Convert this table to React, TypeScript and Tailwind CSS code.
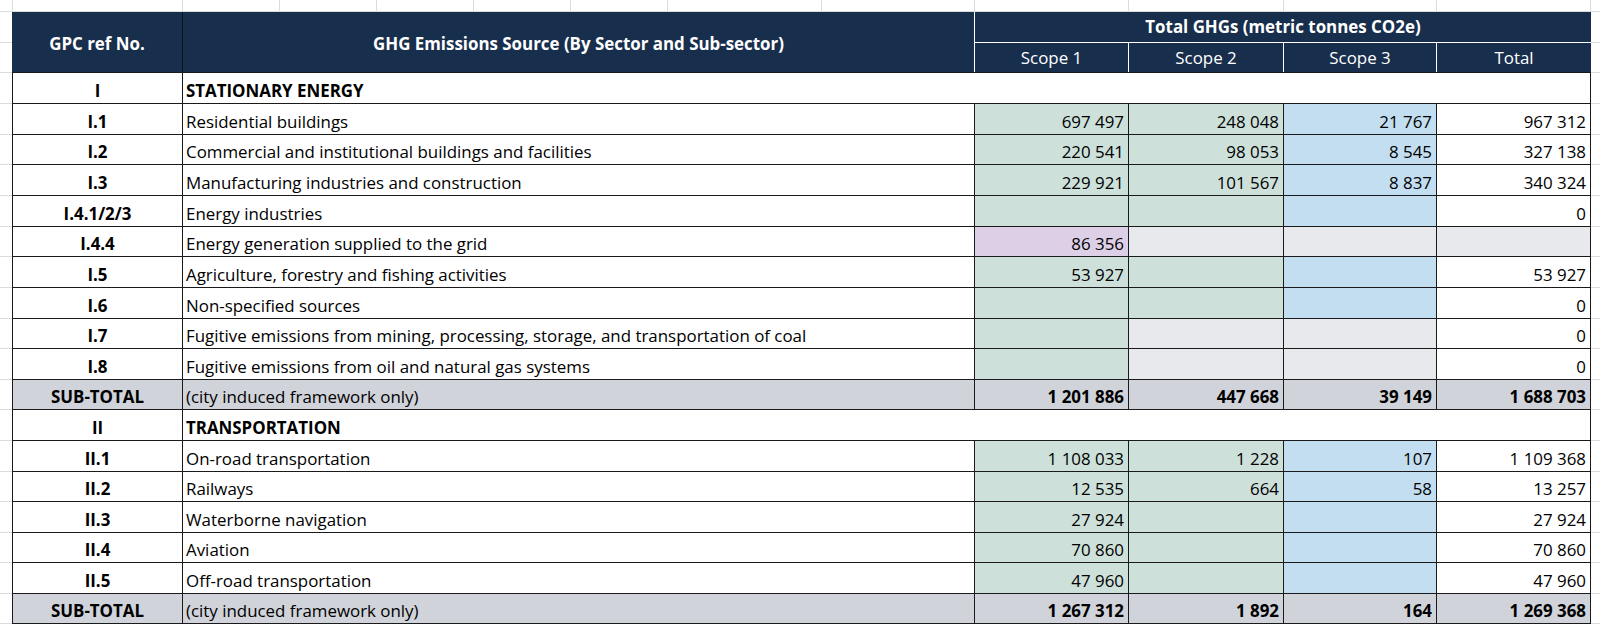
type Fill = "g" | "b" | "p" | "x" | "w" | "s"

interface Cell {
  v?: string
  f: Fill
}

type Row =
  | { kind: "section"; ref: string; title: string }
  | { kind: "item"; ref: string; label: string; cells: Cell[] }
  | { kind: "sub"; cells: string[] }

const fills: Record<Fill, string> = {
  g: "bg-[#cde0da]",
  b: "bg-[#c2def0]",
  p: "bg-[#dccfe6]",
  x: "bg-[#e8e9ed]",
  w: "bg-white",
  s: "bg-[#d0d3d9]",
}

// pixel heights of the sheet rows (incl. bottom border)
const heights = [31, 31, 30, 31, 31, 30, 31, 31, 30, 31, 30, 31, 31, 30, 31, 30, 31, 30]
const hClass: Record<number, string> = { 30: "h-[30px]", 31: "h-[31px]" }

const std = (a?: string, b?: string, c?: string, t?: string): Cell[] => [
  { v: a, f: "g" },
  { v: b, f: "g" },
  { v: c, f: "b" },
  { v: t, f: "w" },
]

const scope1Only = (t?: string): Cell[] => [
  { f: "g" },
  { f: "x" },
  { f: "x" },
  { v: t, f: "w" },
]

const rows: Row[] = [
  { kind: "section", ref: "I", title: "STATIONARY ENERGY" },
  { kind: "item", ref: "I.1", label: "Residential buildings", cells: std("697 497", "248 048", "21 767", "967 312") },
  { kind: "item", ref: "I.2", label: "Commercial and institutional buildings and facilities", cells: std("220 541", "98 053", "8 545", "327 138") },
  { kind: "item", ref: "I.3", label: "Manufacturing industries and construction", cells: std("229 921", "101 567", "8 837", "340 324") },
  { kind: "item", ref: "I.4.1/2/3", label: "Energy industries", cells: std(undefined, undefined, undefined, "0") },
  {
    kind: "item",
    ref: "I.4.4",
    label: "Energy generation supplied to the grid",
    cells: [{ v: "86 356", f: "p" }, { f: "x" }, { f: "x" }, { f: "x" }],
  },
  { kind: "item", ref: "I.5", label: "Agriculture, forestry and fishing activities", cells: std("53 927", undefined, undefined, "53 927") },
  { kind: "item", ref: "I.6", label: "Non-specified sources", cells: std(undefined, undefined, undefined, "0") },
  { kind: "item", ref: "I.7", label: "Fugitive emissions from mining, processing, storage, and transportation of coal", cells: scope1Only("0") },
  { kind: "item", ref: "I.8", label: "Fugitive emissions from oil and natural gas systems", cells: scope1Only("0") },
  { kind: "sub", cells: ["1 201 886", "447 668", "39 149", "1 688 703"] },
  { kind: "section", ref: "II", title: "TRANSPORTATION" },
  { kind: "item", ref: "II.1", label: "On-road transportation", cells: std("1 108 033", "1 228", "107", "1 109 368") },
  { kind: "item", ref: "II.2", label: "Railways", cells: std("12 535", "664", "58", "13 257") },
  { kind: "item", ref: "II.3", label: "Waterborne navigation", cells: std("27 924", undefined, undefined, "27 924") },
  { kind: "item", ref: "II.4", label: "Aviation", cells: std("70 860", undefined, undefined, "70 860") },
  { kind: "item", ref: "II.5", label: "Off-road transportation", cells: std("47 960", undefined, undefined, "47 960") },
  { kind: "sub", cells: ["1 267 312", "1 892", "164", "1 269 368"] },
]

const numWidths = ["w-[154px] border-r", "w-[155px] border-r", "w-[153px] border-r", "flex-1"]
const topStrip = [
  "w-[13px]", "w-[170px]", "w-[97px]", "w-[97px]", "w-[97px]", "w-[97px]", "w-[97px]",
  "w-[154px]", "w-[153px]", "w-[154px]", "w-[155px]", "w-[153px]", "w-[154px]",
]

function Margin() {
  return (
    <div className="flex flex-col">
      <div className="h-[31px] border-b border-[#dcdcdc]" />
      <div className="h-[30px] border-b border-[#dcdcdc]" />
      {heights.map((h, i) => (
        <div key={i} className={`${hClass[h]} border-b border-[#dcdcdc]`} />
      ))}
    </div>
  )
}

function NumCell({ cell, i, bold }: { cell: Cell; i: number; bold?: boolean }) {
  return (
    <div
      className={`${numWidths[i]} ${fills[cell.f]} border-[#1a1a1a] flex items-end justify-end pr-[4px] pb-[2px] ${bold ? "font-bold" : ""}`}
    >
      {cell.v}
    </div>
  )
}

function RefCell({ text }: { text: string }) {
  return (
    <div className="w-[170px] border-r border-[#1a1a1a] flex items-end justify-center pb-[2px] font-bold">
      {text}
    </div>
  )
}

function BodyRow({ row, h }: { row: Row; h: number }) {
  const base = `${hClass[h]} flex border-b border-[#1a1a1a]`
  if (row.kind === "section") {
    return (
      <div className={base}>
        <RefCell text={row.ref} />
        <div className="flex-1 flex items-end pl-[3px] pb-[2px] font-bold">{row.title}</div>
      </div>
    )
  }
  if (row.kind === "sub") {
    return (
      <div className={`${base} bg-[#d0d3d9]`}>
        <RefCell text="SUB-TOTAL" />
        <div className="w-[792px] border-r border-[#1a1a1a] flex items-end pl-[3px] pb-[2px]">(city induced framework only)</div>
        {row.cells.map((v, i) => (
          <NumCell key={i} cell={{ v, f: "s" }} i={i} bold />
        ))}
      </div>
    )
  }
  return (
    <div className={base}>
      <RefCell text={row.ref} />
      <div className="w-[792px] border-r border-[#1a1a1a] flex items-end pl-[3px] pb-[2px] whitespace-nowrap">{row.label}</div>
      {row.cells.map((c, i) => (
        <NumCell key={i} cell={c} i={i} />
      ))}
    </div>
  )
}

export default function App() {
  return (
    <div className="w-[1600px] h-[625px] overflow-hidden bg-white text-black font-['Open_Sans',sans-serif] text-[16.9px] leading-[20px]">
      {/* sheet gridlines above the table */}
      <div className="flex h-[12px] border-b border-[#dcdcdc]">
        {topStrip.map((w, i) => (
          <div key={i} className={`${w} border-r border-[#dcdcdc]`} />
        ))}
        <div className="flex-1" />
      </div>

      <div className="flex">
        <div className="w-[12px]">
          <Margin />
        </div>

        <div className="w-[1579px]">
          {/* header */}
          <div className="flex h-[60px] bg-[#182e4d] text-white font-bold">
            <div className="w-[171px] border-r border-[#0b1422] flex items-center justify-center pt-[3px]">GPC ref No.</div>
            <div className="w-[792px] border-r border-white flex items-center justify-center pt-[3px]">
              GHG Emissions Source (By Sector and Sub-sector)
            </div>
            <div className="flex-1 flex flex-col">
              <div className="h-[31px] border-b border-white flex items-center justify-center">
                Total GHGs (metric tonnes CO2e)
              </div>
              <div className="flex-1 flex font-normal">
                <div className="w-[154px] border-r border-white flex items-center justify-center pt-[1px]">Scope 1</div>
                <div className="w-[155px] border-r border-white flex items-center justify-center pt-[1px]">Scope 2</div>
                <div className="w-[153px] border-r border-white flex items-center justify-center pt-[1px]">Scope 3</div>
                <div className="flex-1 flex items-center justify-center pt-[1px]">Total</div>
              </div>
            </div>
          </div>

          {/* body */}
          <div className="border-t border-l border-r border-[#1a1a1a]">
            {rows.map((r, i) => (
              <BodyRow key={i} row={r} h={heights[i]} />
            ))}
          </div>
        </div>

        <div className="flex-1">
          <Margin />
        </div>
      </div>
    </div>
  )
}
